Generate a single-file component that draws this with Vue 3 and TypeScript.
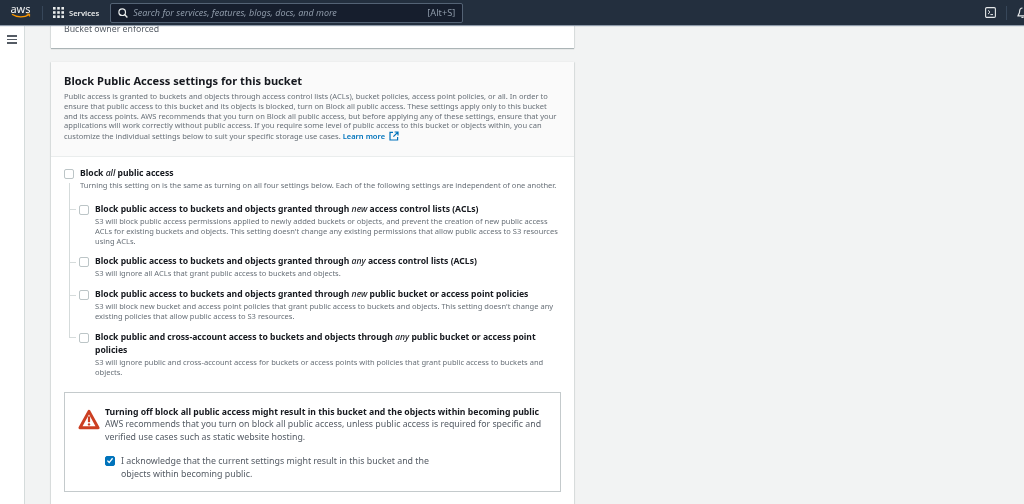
<script setup lang="ts">
interface AccessOption {
  before: string;
  em: string;
  after: string;
  desc: string;
}

const options: AccessOption[] = [
  {
    before: 'Block public access to buckets and objects granted through ',
    em: 'new',
    after: ' access control lists (ACLs)',
    desc: "S3 will block public access permissions applied to newly added buckets or objects, and prevent the creation of new public access ACLs for existing buckets and objects. This setting doesn't change any existing permissions that allow public access to S3 resources using ACLs.",
  },
  {
    before: 'Block public access to buckets and objects granted through ',
    em: 'any',
    after: ' access control lists (ACLs)',
    desc: 'S3 will ignore all ACLs that grant public access to buckets and objects.',
  },
  {
    before: 'Block public access to buckets and objects granted through ',
    em: 'new',
    after: ' public bucket or access point policies',
    desc: "S3 will block new bucket and access point policies that grant public access to buckets and objects. This setting doesn't change any existing policies that allow public access to S3 resources.",
  },
  {
    before: 'Block public and cross-account access to buckets and objects through ',
    em: 'any',
    after: ' public bucket or access point policies',
    desc: 'S3 will ignore public and cross-account access for buckets or access points with policies that grant public access to buckets and objects.',
  },
];
</script>

<template>
  <div class="console">
    <header class="topbar">
      <div class="logo">
        <span class="logo__word">aws</span>
        <svg class="logo__smile" width="20" height="6" viewBox="0 0 20 6" aria-hidden="true">
          <path d="M1 1.2C6 4.6 13 4.8 18 1.6" fill="none" stroke="#f90" stroke-width="1.3" />
          <path d="M15.6 1h3v2.6" fill="none" stroke="#f90" stroke-width="1" />
        </svg>
      </div>
      <span class="topbar__sep"></span>
      <svg class="grid-icon" width="11" height="11" viewBox="0 0 11 11" aria-hidden="true">
        <g fill="#eaeded">
          <rect x="0" y="0" width="2.6" height="2.6" /><rect x="4.2" y="0" width="2.6" height="2.6" /><rect x="8.4" y="0" width="2.6" height="2.6" />
          <rect x="0" y="4.2" width="2.6" height="2.6" /><rect x="4.2" y="4.2" width="2.6" height="2.6" /><rect x="8.4" y="4.2" width="2.6" height="2.6" />
          <rect x="0" y="8.4" width="2.6" height="2.6" /><rect x="4.2" y="8.4" width="2.6" height="2.6" /><rect x="8.4" y="8.4" width="2.6" height="2.6" />
        </g>
      </svg>
      <span class="topbar__services">Services</span>
      <div class="search">
        <svg width="10" height="10" viewBox="0 0 10 10" aria-hidden="true">
          <circle cx="4.2" cy="4.2" r="3.3" fill="none" stroke="#eaeded" stroke-width="1.2" />
          <path d="M6.6 6.6 9.4 9.4" stroke="#eaeded" stroke-width="1.4" />
        </svg>
        <span class="search__text">Search for services, features, blogs, docs, and more</span>
        <span class="search__key">[Alt+S]</span>
      </div>
      <div class="topbar__right">
        <svg width="11" height="11" viewBox="0 0 11 11" aria-hidden="true">
          <rect x="0.6" y="0.6" width="9.8" height="9.8" rx="1.2" fill="none" stroke="#e4e7e9" stroke-width="1.1" />
          <path d="M3 3.3 5 5.2 3 7.1M5.4 7.6h2.6" fill="none" stroke="#e4e7e9" stroke-width="1" />
        </svg>
        <span class="topbar__sep topbar__sep--right"></span>
        <svg width="11" height="12" viewBox="0 0 11 12" aria-hidden="true">
          <path d="M5.5 1C3.4 1 2.6 2.8 2.6 4.6 2.6 6.6 1.2 7.6 1 8.8h9" fill="none" stroke="#e4e7e9" stroke-width="1.2" />
          <path d="M4.4 10.4h2.2" stroke="#e4e7e9" stroke-width="1.2" />
        </svg>
      </div>
    </header>

    <div class="body">
      <aside class="rail">
        <span class="rail__burger"><i></i><i></i><i></i></span>
      </aside>

      <main class="content">
        <section class="panel panel--cut">
          <p class="owner">Bucket owner enforced</p>
        </section>

        <section class="panel panel--main">
          <div class="panel__head">
            <h2>Block Public Access settings for this bucket</h2>
            <p>
              Public access is granted to buckets and objects through access control lists (ACLs), bucket policies, access point policies, or all. In order to ensure that public access to this bucket and its objects is blocked, turn on Block all public access. These settings apply only to this bucket and its access points. AWS recommends that you turn on Block all public access, but before applying any of these settings, ensure that your applications will work correctly without public access. If you require some level of public access to this bucket or objects within, you can customize the individual settings below to suit your specific storage use cases.
              <a class="learn">Learn more<svg width="10" height="10" viewBox="0 0 10 10" aria-hidden="true">
                  <path d="M4 1.4H1v7.6h7.6V6M5.6 1h3.4v3.4M9 1 4.4 5.6" fill="none" stroke="#0073bb" stroke-width="1.2" />
                </svg></a>
            </p>
          </div>

          <div class="panel__body">
            <div class="master">
              <span class="box"></span>
              <div>
                <div class="opt-title">Block <em>all</em> public access</div>
                <div class="opt-desc">Turning this setting on is the same as turning on all four settings below. Each of the following settings are independent of one another.</div>
              </div>
            </div>

            <ul class="tree">
              <li v-for="(opt, i) in options" :key="i" class="tree__item">
                <span class="box"></span>
                <div>
                  <div class="opt-title">{{ opt.before }}<em>{{ opt.em }}</em>{{ opt.after }}</div>
                  <div class="opt-desc">{{ opt.desc }}</div>
                </div>
              </li>
            </ul>

            <div class="warning">
              <svg class="warning__icon" width="22" height="21" viewBox="0 0 22 21" aria-hidden="true">
                <path d="M11 2.4 20 18.8H2Z" fill="#fff" stroke="#cc3f22" stroke-width="3" stroke-linejoin="round" />
                <path d="M11 7.4v5.8" stroke="#cc3f22" stroke-width="2.2" />
                <circle cx="11" cy="15.4" r="1.2" fill="#cc3f22" />
              </svg>
              <div class="warning__main">
                <div class="warning__title">Turning off block all public access might result in this bucket and the objects within becoming public</div>
                <div class="warning__text">AWS recommends that you turn on block all public access, unless public access is required for specific and verified use cases such as static website hosting.</div>
                <div class="ack">
                  <span class="box box--on">
                    <svg width="9" height="9" viewBox="0 0 9 9" aria-hidden="true">
                      <path d="M1.6 4.6 3.6 6.8 7.4 2" fill="none" stroke="#fff" stroke-width="1.5" />
                    </svg>
                  </span>
                  <span class="ack__text">I acknowledge that the current settings might result in this bucket and the objects within becoming public.</span>
                </div>
              </div>
            </div>
          </div>
        </section>
      </main>
    </div>
  </div>
</template>

<style scoped>
.console {
  display: flex;
  flex-direction: column;
  width: 1024px;
  height: 504px;
  overflow: hidden;
  background: #f2f3f3;
  color: #16191f;
  font-family: "Noto Sans", "Open Sans", sans-serif;
  filter: blur(0.45px);
}

.topbar {
  display: flex;
  flex: none;
  align-items: center;
  height: 25px;
  padding-left: 10px;
  background: #232f3e;
  box-shadow: 0 1px 1px #8d99a8;
  position: relative;
  z-index: 2;
}

.logo {
  display: flex;
  flex-direction: column;
  align-items: center;
  width: 21px;
  margin-top: -3px;
}

.logo__word {
  color: #f2f3f3;
  font-size: 11px;
  line-height: 9px;
}

.topbar__sep {
  width: 1px;
  height: 14px;
  margin: 0 10px 0 11px;
  background: #37475a;
}

.grid-icon {
  flex: none;
}

.topbar__services {
  margin-left: 5px;
  color: #eaeded;
  font-size: 7.6px;
  font-weight: 600;
}

.search {
  display: flex;
  align-items: center;
  width: 353px;
  height: 20px;
  margin-left: 11px;
  padding: 0 7px;
  box-sizing: border-box;
  background: #161e2d;
  border: 1px solid #546375;
  border-radius: 2px;
}

.search__text {
  margin-left: 5px;
  color: #8d99a8;
  font-size: 9px;
  font-style: italic;
}

.search__key {
  margin-left: auto;
  color: #8d99a8;
  font-size: 9.2px;
}

.topbar__right {
  display: flex;
  align-items: center;
  margin-left: auto;
  margin-right: -4px;
}

.topbar__sep--right {
  margin: 0 10px;
}

.body {
  display: flex;
  flex: 1;
  min-height: 0;
}

.rail {
  flex: none;
  width: 25px;
  box-sizing: border-box;
  padding: 10px 0 0 7px;
  background: #fff;
  border-right: 1px solid #d5dbdb;
}

.rail__burger {
  display: flex;
  flex-direction: column;
  gap: 2px;
  width: 10px;
}

.rail__burger i {
  height: 1.5px;
  background: #545b64;
}

.content {
  display: flex;
  flex-direction: column;
  gap: 14px;
  width: 523px;
  margin-left: 26px;
}

.panel {
  flex: none;
  background: #fff;
  box-shadow: 0 1px 1px rgba(0, 28, 36, 0.28), 1px 0 1px rgba(0, 28, 36, 0.06), -1px 0 1px rgba(0, 28, 36, 0.06);
}

.panel--cut {
  height: 23px;
}

.panel--main {
  padding-bottom: 30px;
}

.owner {
  margin: 0;
  padding: 0 13px;
  color: #545b64;
  font-size: 8.75px;
  line-height: 8px;
}

.panel__head {
  height: 95px;
  box-sizing: border-box;
  padding: 12px 13px 0;
  background: #fafafa;
  border-bottom: 1px solid #eaeded;
}

.panel__head h2 {
  margin: 0 0 4px;
  font-size: 11.1px;
  font-weight: 700;
  line-height: 14px;
}

.panel__head p {
  margin: 0;
  color: #687078;
  font-size: 7.55px;
  line-height: 9.8px;
}

.learn {
  color: #0073bb;
  font-weight: 600;
}

.learn svg {
  vertical-align: -2px;
  margin-left: 4px;
}

.panel__body {
  padding: 9.5px 13px 0;
}

.master {
  display: flex;
  gap: 6px;
}

.box {
  display: flex;
  flex: none;
  align-items: center;
  justify-content: center;
  width: 8px;
  height: 8px;
  margin-top: 2px;
  background: #fff;
  border: 1px solid #bcc5c7;
  border-radius: 2px;
}

.box--on {
  background: #0073bb;
  border-color: #0073bb;
}

.opt-title {
  font-size: 8.6px;
  font-weight: 700;
  line-height: 13px;
}

.opt-title em {
  font-weight: 500;
}

.opt-desc {
  color: #687078;
  font-size: 7.55px;
  line-height: 10.2px;
}

.tree {
  margin: 3.5px 0 0;
  padding: 0 0 0 15px;
  list-style: none;
}

.tree__item {
  display: flex;
  gap: 6px;
  position: relative;
  padding-top: 9.3px;
}

.tree__item::before {
  content: "";
  position: absolute;
  left: -10px;
  top: -10px;
  bottom: 0;
  width: 1px;
  background: #d5dbdb;
}

.tree__item:last-child::before {
  bottom: auto;
  height: 26px;
}

.tree__item::after {
  content: "";
  position: absolute;
  left: -10px;
  top: 16px;
  width: 7px;
  height: 1px;
  background: #d5dbdb;
}

.warning {
  display: flex;
  gap: 5px;
  height: 100px;
  margin-top: 15px;
  box-sizing: border-box;
  padding: 13px 12px 0 13px;
  border: 1px solid #c4cacc;
}

.warning__icon {
  flex: none;
  margin-top: 3px;
}

.warning__title {
  font-size: 8.68px;
  font-weight: 700;
  line-height: 12px;
}

.warning__text {
  color: #545b64;
  font-size: 8.8px;
  line-height: 13px;
}

.ack {
  display: flex;
  gap: 6px;
  width: 330px;
  margin-top: 10.5px;
}

.ack .box {
  margin-top: 1px;
}

.ack__text {
  color: #545b64;
  font-size: 8.85px;
  line-height: 13px;
}
</style>

<style>
html,
body {
  margin: 0;
  background: #f2f3f3;
}
</style>
